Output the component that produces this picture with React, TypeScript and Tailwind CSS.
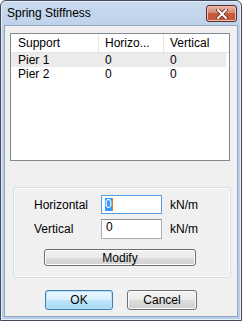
import React from 'react';

const rows = [
    { name: 'Pier 1', h: '0', v: '0', selected: true },
    { name: 'Pier 2', h: '0', v: '0', selected: false },
];

function Btn({ children, isDefault, className }: { children: React.ReactNode; isDefault?: boolean; className: string }) {
    return (
        <button
            className={
                isDefault
                    ? `${className} shrink-0 flex items-center justify-center rounded-[3px] border border-[#3c7fb1] bg-[linear-gradient(#eaf6fd_0%,#d9f0fc_50%,#bee6fd_51%,#a7d9f5_100%)] shadow-[inset_0_0_0_1px_#b9e2f8]`
                    : `${className} shrink-0 flex items-center justify-center rounded-[3px] border border-[#707070] bg-[linear-gradient(#f2f2f2_0%,#ebebeb_50%,#dddddd_51%,#cfcfcf_100%)] shadow-[inset_0_0_0_1px_#fcfcfc]`
            }
        >
            {children}
        </button>
    );
}

export default function App() {
    return (
        <div className="w-[242px] h-[321px] bg-white font-['Liberation_Sans',Arial,sans-serif] text-[12px] text-black">
            <div className="w-full h-full flex flex-col rounded-t-[6px] border border-[#404a58] bg-[linear-gradient(#c9daee,#bcd0e9_30px,#b8cde8)] shadow-[inset_0_0_0_1px_#e6eefa]">
                {/* title bar */}
                <div className="h-[24px] flex items-start justify-between pl-[6px] pr-[4px]">
                    <span className="mt-[5px] text-[12px] leading-[14px] text-black">Spring Stiffness</span>
                    <div className="mt-[4px] w-[31px] h-[17px] rounded-[3px] border border-[#5b2a23] bg-[linear-gradient(#eab3a4_0%,#d88a73_45%,#c55a3d_50%,#c8543a_100%)] flex items-center justify-center shadow-[inset_0_0_0_1px_#eec1b4]">
                        <svg width="12" height="10" viewBox="0 0 12 10">
                            <path d="M2 1 L10 9 M10 1 L2 9" stroke="#5a2a20" strokeWidth="3.6" strokeLinecap="square" />
                            <path d="M2 1 L10 9 M10 1 L2 9" stroke="#ffffff" strokeWidth="2" strokeLinecap="square" />
                        </svg>
                    </div>
                </div>

                {/* client */}
                <div className="flex-1 mx-[3px] mb-[3px] bg-[#f0f0f0] border border-[#93a6c2] flex flex-col pt-[7px] pl-[5px]">
                    {/* list view */}
                    <div className="w-[220px] h-[128px] bg-white border border-[#828790]">
                        <div className="flex h-[19px] items-center bg-white border-b border-[#e5e5e5]">
                            <div className="w-[88px] h-full flex items-center pl-[7px] border-r border-[#e5e5e5]">Support</div>
                            <div className="w-[65px] h-full flex items-center pl-[6px] border-r border-[#e5e5e5]">Horizo...</div>
                            <div className="flex-1 h-full flex items-center pl-[6px]">Vertical</div>
                        </div>
                        {rows.map((r) => (
                            <div key={r.name} className={`flex h-[14px] items-center mr-[3px] ${r.selected ? 'bg-[#ebebeb]' : ''}`}>
                                <div className="w-[88px] pl-[7px]">{r.name}</div>
                                <div className="w-[65px] pl-[6px]">{r.h}</div>
                                <div className="flex-1 pl-[6px]">{r.v}</div>
                            </div>
                        ))}
                    </div>

                    {/* group box */}
                    <div className="mt-[26px] ml-[3px] w-[218px] h-[91px] rounded-[3px] border border-[#d5dfe5] shadow-[inset_0_0_0_1px_#fbfbfb] flex flex-col pt-[7px]">
                        <div className="flex items-center h-[19px]">
                            <span className="w-[87px] shrink-0 pl-[20px]">Horizontal</span>
                            <div className="w-[61px] shrink-0 h-[19px] bg-white border border-[#569de5] flex items-center pl-[3px]">
                                <span className="bg-[#3399ff] text-white leading-[13px]">0</span>
                                <span className="w-[1px] h-[13px] bg-[#e07a1f]"></span>
                            </div>
                            <span className="ml-[8px]">kN/m</span>
                        </div>
                        <div className="flex items-center h-[20px] mt-[5px]">
                            <span className="w-[87px] shrink-0 pl-[20px]">Vertical</span>
                            <div className="w-[61px] shrink-0 h-[20px] bg-white border border-[#abadb3] border-t-[#8e8f8f] flex items-start pl-[4px]">
                                <span className="leading-[15px]">0</span>
                            </div>
                            <span className="ml-[8px]">kN/m</span>
                        </div>
                        <Btn className="mt-[10px] ml-[30px] w-[152px] h-[17px]">Modify</Btn>
                    </div>

                    {/* footer buttons */}
                    <div className="flex mt-[12px] ml-[35px] gap-[14px]">
                        <Btn isDefault className="w-[68px] h-[20px]">OK</Btn>
                        <Btn className="w-[70px] h-[20px]">Cancel</Btn>
                    </div>
                </div>
            </div>
        </div>
    );
}
